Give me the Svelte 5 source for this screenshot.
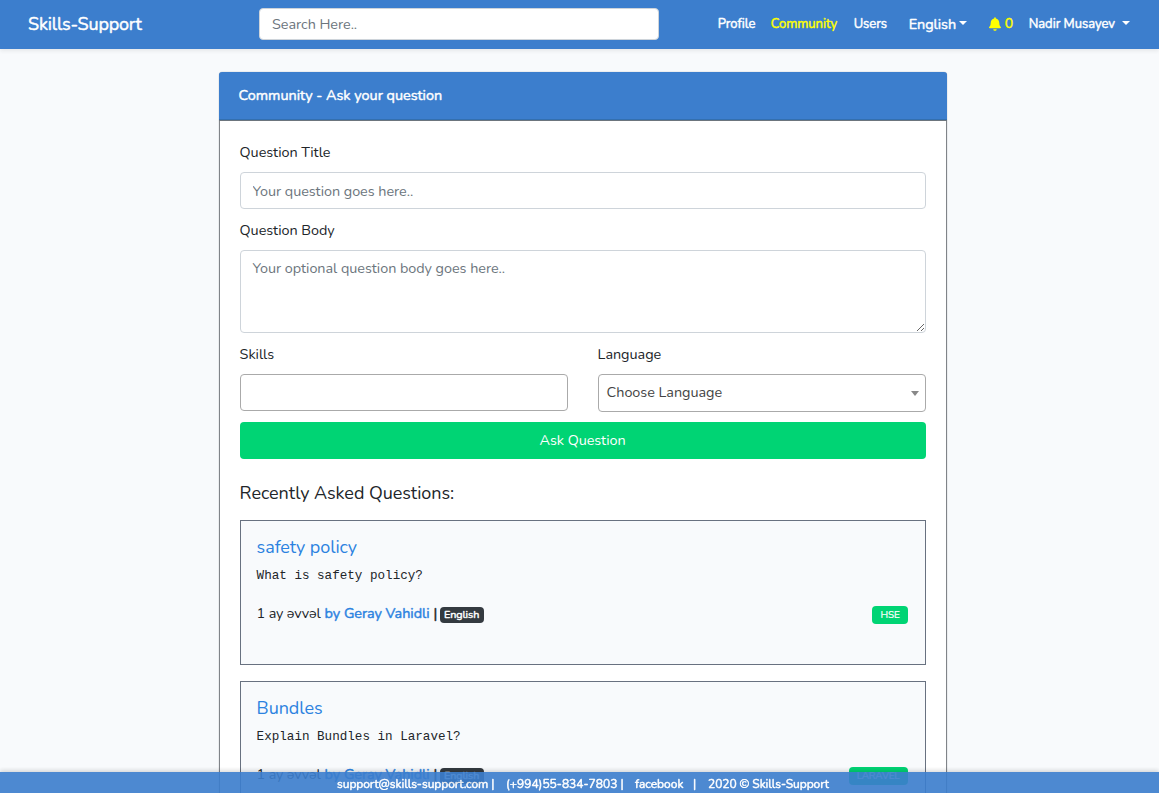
<script>
  const questions = [
    { title: 'safety policy', body: 'What is safety policy?', skill: 'HSE' },
    { title: 'Bundles', body: 'Explain Bundles in Laravel?', skill: 'LARAVEL' }
  ];
</script>

<nav>
  <a class="brand" href="#home">Skills-Support</a>
  <input class="search" placeholder="Search Here.." />
  <div class="links">
    <a class="profile" href="#profile">Profile</a>
    <a class="community" href="#community">Community</a>
    <a class="users" href="#users">Users</a>
    <a class="lang" href="#language">English<i class="caret"></i></a>
    <a class="bell" href="#notifications">
      <svg viewBox="0 0 448 512" width="12" height="14"><path fill="currentColor" d="M224 512c35.32 0 63.97-28.65 63.97-64H160.03c0 35.35 28.65 64 63.97 64zm215.39-149.71c-19.32-20.76-55.47-51.99-55.47-154.29 0-77.7-54.48-139.9-127.94-155.16V32c0-17.67-14.32-32-31.98-32s-31.98 14.33-31.98 32v20.84C118.56 68.1 64.08 130.3 64.08 208c0 102.3-36.15 133.53-55.47 154.29-6 6.45-8.66 14.16-8.61 21.71.11 16.4 12.98 32 32.1 32h383.8c19.12 0 32-15.6 32.1-32 .05-7.55-2.61-15.27-8.61-21.71z"/></svg>
      <span>0</span>
    </a>
    <a class="user" href="#account">Nadir Musayev<i class="caret"></i></a>
  </div>
</nav>

<main>
  <header>Community - Ask your question</header>
  <form>
    <label for="title">Question Title</label>
    <input id="title" class="field" placeholder="Your question goes here.." />
    <label for="body">Question Body</label>
    <textarea id="body" class="field" placeholder="Your optional question body goes here.."></textarea>
    <div class="row">
      <div>
        <span class="label">Skills</span>
        <div class="select skills"></div>
      </div>
      <div>
        <span class="label">Language</span>
        <div class="select"><span>Choose Language</span><i class="arrow"></i></div>
      </div>
    </div>
    <button type="button">Ask Question</button>
  </form>
  <h2>Recently Asked Questions:</h2>
  {#each questions as q}
    <article>
      <h3>{q.title}</h3>
      <pre>{q.body}</pre>
      <div class="meta">
        <span class="ago">1 ay əvvəl</span>
        <a class="author" href="#author">by Geray Vahidli</a>
        <b>|</b>
        <span class="badge">English</span>
        <span class="skill">{q.skill}</span>
      </div>
    </article>
  {/each}
</main>

<footer>
  <span class="mail">support@skills-support.com |</span>
  <span class="phone">(+994)55-834-7803 |</span>
  <span class="fb">facebook</span>
  <span class="bar">|</span>
  <span class="copy">2020 © Skills-Support</span>
</footer>

<style>
  :global(body) {
    background: #f8fafc;
    color: #212529;
    font: 14.4px/23px Nunito, Lato, "Open Sans", sans-serif;
    letter-spacing: -.03px;
    height: 793px;
    overflow: hidden;
  }
  nav, nav *, main, main *, footer, footer * { box-sizing: border-box; }
  a { color: inherit; text-decoration: none; white-space: nowrap; }
  .brand, .links a, header, .author, .meta b, .badge, footer { font-weight: 400; -webkit-text-stroke: .45px currentColor; }
  nav {
    position: relative;
    display: flex;
    align-items: flex-start;
    height: 49px;
    padding: 8px 29px 0 28px;
    background: #3c7ecd;
    color: #fff;
    box-shadow: 0 2px 4px rgba(0, 0, 0, .075);
  }
  .brand { width: 231px; font-size: 18px; line-height: 32px; letter-spacing: -.17px; }
  input, textarea, button { font: inherit; letter-spacing: -.04px; outline: 0; }
  .search {
    width: 400px;
    height: 32px;
    padding: 0 12px;
    border: 1px solid #ced4da;
    border-radius: 4px;
  }
  ::placeholder { color: #6c757d; opacity: 1; }
  .links { display: flex; margin-left: auto; font-size: 13px; line-height: 32px; }
  .links a { display: flex; align-items: center; height: 32px; }
  .profile { width: 53px; }
  .community { width: 83px; color: #ff0; }
  .users { width: 55px; }
  .lang { width: 80px; font-size: 14.4px; }
  .bell { width: 40px; gap: 4px; color: #ff0; }
  .bell svg { margin-top: -1px; }
  .bell span { font-size: 14px; margin-top: -1px; }
  .caret { border: 4px solid transparent; border-top-color: #fff; border-bottom: 0; margin: -3px 0 0 4px; }
  .lang .caret { margin-left: 3px; }
  .user .caret { margin-left: 7px; }
  main {
    width: 728px;
    height: 730px;
    margin: 23px 0 0 218.6px;
    padding: 0 20px;
    background: #fff;
    border: solid #808489;
    border-width: 0 1px;
    border-radius: 4px;
    box-shadow: 0 0 0 1px rgba(0, 0, 0, .05);
  }
  header {
    height: 49px;
    margin: 0 -21px 20px;
    padding: 0 20px;
    background: #3c7ecd;
    color: #fff;
    border-bottom: 1px solid #6c757d;
    box-shadow: inset 0 -1px #336faf;
    border-radius: 3px 3px 0 0;
    line-height: 47px;
    letter-spacing: 0;
  }
  form { display: flex; flex-direction: column; }
  label, .label { display: block; height: 31px; }
  .field {
    width: 100%;
    height: 37px;
    margin: 0 0 10px;
    padding: 6px 12px;
    border: 1px solid #ced4da;
    border-radius: 4px;
    background: #fff;
  }
  textarea.field { height: 83px; resize: vertical; }
  .row { display: grid; grid-template-columns: 1fr 1fr; gap: 30px; }
  .select {
    display: flex;
    align-items: center;
    justify-content: space-between;
    height: 38px;
    padding: 0 6px 2px 8px;
    border: 1px solid #aaa;
    border-radius: 4px;
    color: #444;
  }
  .skills { height: 37px; }
  .arrow { border: 4px solid transparent; border-top: 5px solid #888; border-bottom: 0; margin-top: 2px; }
  button {
    height: 37px;
    margin-top: 10px;
    border: 0;
    border-radius: 4px;
    background: #00d474;
    color: #fff;
  }
  h2 { margin: 24px 0 16px; font-size: 18px; line-height: 21px; font-weight: 400; letter-spacing: -.04px; }
  article {
    height: 145px;
    margin-bottom: 16px;
    padding: 15px 17px 0 16px;
    border: 1px solid #687180;
    background: #f8fafc;
  }
  h3 { margin: 0; color: #2c82e0; font-size: 18px; line-height: 22px; font-weight: 400; letter-spacing: -.08px; }
  pre { margin: 9px 0 18px; font: 12.6px/19px "Liberation Mono", monospace; letter-spacing: 0; }
  .meta { display: flex; align-items: center; height: 19px; }
  .ago { width: 68px; white-space: nowrap; letter-spacing: -.15px; }
  .author { width: 109px; color: #2c82e0; }
  .meta b { width: 6px; }
  .badge, .skill { border-radius: 4px; color: #fff; text-align: center; }
  .badge { width: 44px; height: 16px; margin-top: 2px; background: #343a40; font-size: 10.8px; line-height: 15px; letter-spacing: -.08px; }
  .skill { height: 18px; margin: 3px 0 0 auto; padding: 0 8px; background: #00d474; font-size: 10px; line-height: 18px; letter-spacing: -.15px; -webkit-text-stroke: .2px #fff; }
  footer {
    position: fixed;
    inset: auto 0 0;
    display: flex;
    height: 21px;
    padding: 1px 0 0 337px;
    background: #3c7ecd;
    color: #fff;
    opacity: .91;
    box-shadow: 0 -2px 4px rgba(0, 0, 0, .15);
    font-size: 12px;
    letter-spacing: -.06px;
  }
  footer span { white-space: nowrap; }
  .mail { width: 169px; }
  .phone { width: 129px; letter-spacing: 0; }
  .fb { width: 58px; letter-spacing: 0; }
  .bar { width: 15px; }
</style>
